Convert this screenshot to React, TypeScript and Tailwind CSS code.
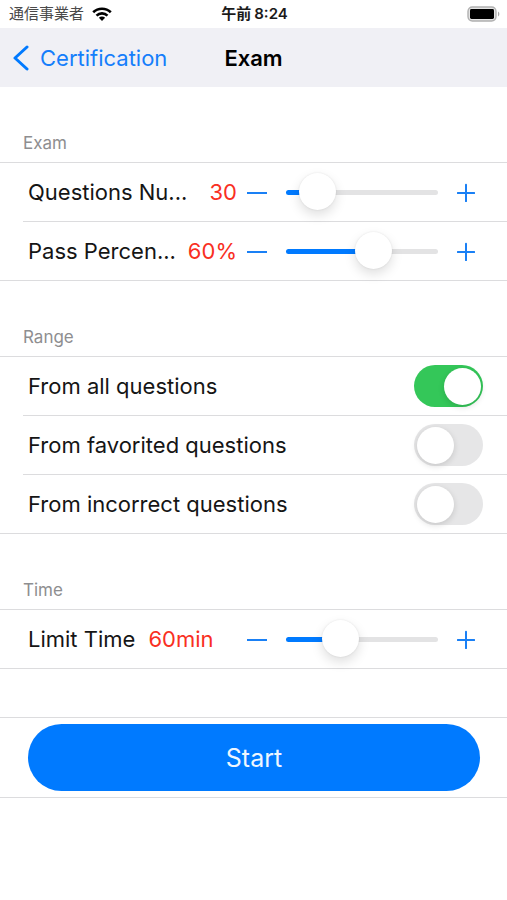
import { useState, type CSSProperties, type ReactNode } from "react";

function StatusBar() {
  return (
    <div className="grid h-7 grid-cols-[1fr_auto_1fr] items-center bg-white pl-[9px] pr-[7px] text-[15px] leading-5">
      <div className="flex items-center gap-2">
        <span className="text-[#4a4a4a]">通信事業者</span>
        <svg width="20" height="14" viewBox="0 0 20 14" aria-hidden="true">
          <path d="M1.2 5.3a12.6 12.6 0 0 1 17.6 0" fill="none" stroke="#000" strokeWidth="2.6" />
          <path d="M4.5 8.6a7.9 7.9 0 0 1 11 0" fill="none" stroke="#000" strokeWidth="2.6" />
          <path d="M10 14 6.9 10.8a4.4 4.4 0 0 1 6.2 0Z" fill="#000" />
        </svg>
      </div>
      <span className="font-semibold text-[#1a1a1a]">
        午前<span className="ml-[3px]">8:24</span>
      </span>
      <svg className="justify-self-end" width="33" height="16" viewBox="0 0 33 16" aria-hidden="true">
        <rect x="1" y="1" width="28" height="14" rx="4.4" fill="#e4e4e4" stroke="#b0b0b0" strokeWidth="1.4" />
        <rect x="3" y="3" width="24" height="10" rx="1.4" fill="#000" />
        <path d="M31 5.6a2.8 2.8 0 0 1 0 4.8Z" fill="#a9a9a9" />
      </svg>
    </div>
  );
}

function NavBar() {
  return (
    <header className="grid h-[59px] grid-cols-[1fr_auto_1fr] items-center bg-[#f0f0f5] px-3">
      <button type="button" className="flex items-center gap-[11px] justify-self-start text-[22px] leading-7 text-[#157efb]">
        <svg width="17" height="26" viewBox="0 0 17 26" fill="none" aria-hidden="true">
          <path d="M15 2 3 13l12 11" stroke="#007aff" strokeWidth="3" strokeLinecap="round" strokeLinejoin="round" />
        </svg>
        Certification
      </button>
      <h1 className="text-[22px] font-semibold leading-7 text-black">Exam</h1>
    </header>
  );
}

function Section({ title, children }: { title: string; children: ReactNode }) {
  return (
    <section>
      <h2 className="flex h-[75px] items-end px-[23px] pb-[7px] text-[17px] leading-6 text-[#8e8e90]">{title}</h2>
      <ul className="border-y border-[#dcdcde]">{children}</ul>
    </section>
  );
}

function Row({ children }: { children: ReactNode }) {
  return (
    <li className="ml-[23px] border-t border-[#dcdcde] pl-[5px] first:border-t-0">
      <div className="flex h-[58px] items-center">{children}</div>
    </li>
  );
}

type SliderRowProps = {
  label: string;
  // shortened label for names that do not fit beside the value
  shortLabel?: string;
  unit?: string;
  initial: number;
  min: number;
  max: number;
  step: number;
};

function SliderRow({ label, shortLabel, unit = "", initial, min, max, step }: SliderRowProps) {
  const [value, setValue] = useState(initial);
  const fill = ((value - min) / (max - min)) * 100;
  const change = (next: number) => setValue(Math.min(max, Math.max(min, next)));

  return (
    <Row>
      <div
        className={`flex w-[209px] shrink-0 whitespace-nowrap text-[22px] leading-7 ${shortLabel ? "justify-between" : "gap-[13px]"}`}
      >
        <span className="text-[#151515]">{shortLabel ?? label}</span>
        <span className="text-[#f92f22]">
          {value}
          {unit}
        </span>
      </div>
      <button type="button" aria-label={`Decrease ${label}`} className="ml-[10px] h-10 shrink-0" onClick={() => change(value - step)}>
        <svg width="20" height="20" viewBox="0 0 20 20" aria-hidden="true">
          <path d="M0.5 11h19" stroke="#1a80f5" strokeWidth="2" strokeLinecap="round" />
        </svg>
      </button>
      <input
        type="range"
        aria-label={label}
        min={min}
        max={max}
        step={step}
        value={value}
        onChange={(e) => change(Number(e.target.value))}
        style={{ "--fill": `${fill}%` } as CSSProperties}
        className="mx-[19px] h-10 min-w-0 flex-1 appearance-none bg-transparent [&::-webkit-slider-runnable-track]:h-[5px] [&::-webkit-slider-runnable-track]:rounded-full [&::-webkit-slider-runnable-track]:bg-[linear-gradient(to_right,#007aff_var(--fill),#e3e3e4_var(--fill))] [&::-webkit-slider-thumb]:-mt-[17px] [&::-webkit-slider-thumb]:size-[37px] [&::-webkit-slider-thumb]:appearance-none [&::-webkit-slider-thumb]:rounded-full [&::-webkit-slider-thumb]:bg-white [&::-webkit-slider-thumb]:shadow-[0_0_2px_rgba(0,0,0,0.1),0_5px_12px_rgba(0,0,0,0.13)]"
      />
      <button type="button" aria-label={`Increase ${label}`} className="mr-8 h-10 shrink-0" onClick={() => change(value + step)}>
        <svg width="18" height="20" viewBox="0 0 18 20" aria-hidden="true">
          <path d="M0.8 11h16.4M9 2.8v16.4" stroke="#1a80f5" strokeWidth="2" strokeLinecap="round" />
        </svg>
      </button>
    </Row>
  );
}

function SwitchRow({ label, on = false }: { label: string; on?: boolean }) {
  return (
    <Row>
      <label className="flex flex-1 items-center justify-between pr-6 text-[22px] leading-7 text-[#151515]">
        {label}
        <input
          type="checkbox"
          role="switch"
          defaultChecked={on}
          className="flex h-[42px] w-[69px] shrink-0 appearance-none items-center rounded-full bg-[#e6e6e7] pl-[3px] before:block before:size-[37px] before:rounded-full before:bg-white before:shadow-[0_2px_6px_rgba(0,0,0,0.14)] checked:bg-[#34c759] checked:before:ml-[27px]"
        />
      </label>
    </Row>
  );
}

export default function App() {
  return (
    <div className="min-h-screen bg-white font-['Inter','Noto_Sans_CJK_JP',sans-serif]">
      <StatusBar />
      <NavBar />
      <main>
        <Section title="Exam">
          <SliderRow label="Questions Number" shortLabel="Questions Nu..." initial={30} min={10} max={190} step={10} />
          <SliderRow label="Pass Percentage" shortLabel="Pass Percen..." unit="%" initial={60} min={0} max={100} step={5} />
        </Section>
        <Section title="Range">
          <SwitchRow label="From all questions" on />
          <SwitchRow label="From favorited questions" />
          <SwitchRow label="From incorrect questions" />
        </Section>
        <Section title="Time">
          <SliderRow label="Limit Time" unit="min" initial={60} min={10} max={170} step={10} />
        </Section>
        <div className="mt-12 border-y border-[#dcdcde] py-[6px] pl-7 pr-[27px]">
          <button type="button" className="h-[67px] w-full rounded-full bg-[#007aff] text-[25px] leading-8 text-[#eef6ff]">
            Start
          </button>
        </div>
      </main>
    </div>
  );
}
